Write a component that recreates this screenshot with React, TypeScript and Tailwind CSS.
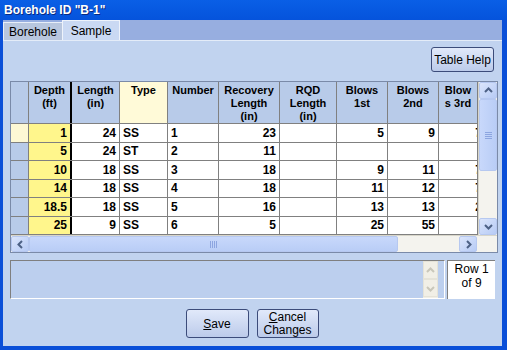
import React from "react";

const cols = [
  { key: "depth", label: ["Depth", "(ft)"], w: 43, align: "right" },
  { key: "length", label: ["Length", "(in)"], w: 48, align: "right" },
  { key: "type", label: ["Type"], w: 48, align: "left" },
  { key: "number", label: ["Number"], w: 51, align: "left" },
  { key: "rec", label: ["Recovery", "Length", "(in)"], w: 61, align: "right" },
  { key: "rqd", label: ["RQD", "Length", "(in)"], w: 57, align: "right" },
  { key: "b1", label: ["Blows", "1st"], w: 51, align: "right" },
  { key: "b2", label: ["Blows", "2nd"], w: 51, align: "right" },
  { key: "b3", label: ["Blow", "s 3rd"], w: 39, align: "right" },
];

const rows = [
  { depth: "1", length: "24", type: "SS", number: "1", rec: "23", rqd: "", b1: "5", b2: "9", b3: "7" },
  { depth: "5", length: "24", type: "ST", number: "2", rec: "11", rqd: "", b1: "", b2: "", b3: "" },
  { depth: "10", length: "18", type: "SS", number: "3", rec: "18", rqd: "", b1: "9", b2: "11", b3: "7" },
  { depth: "14", length: "18", type: "SS", number: "4", rec: "18", rqd: "", b1: "11", b2: "12", b3: "7" },
  { depth: "18.5", length: "18", type: "SS", number: "5", rec: "16", rqd: "", b1: "13", b2: "13", b3: "2" },
  { depth: "25", length: "9", type: "SS", number: "6", rec: "5", rqd: "", b1: "25", b2: "55", b3: "" },
];

const font = { fontFamily: "'Liberation Sans', Arial, sans-serif" };

function Arrow({ dir, disabled }: { dir: "up" | "down" | "left" | "right"; disabled?: boolean }) {
  const pts = {
    up: "2,7 5.5,3.5 9,7",
    down: "2,4 5.5,7.5 9,4",
    left: "7,2 3.5,5.5 7,9",
    right: "4,2 7.5,5.5 4,9",
  }[dir];
  return (
    <svg width="11" height="11" viewBox="0 0 11 11">
      <polyline points={pts} fill="none" stroke={disabled ? "#c9c7ba" : "#4d6185"} strokeWidth="2" />
    </svg>
  );
}

function ScrollBtn({ dir, className = "" }: { dir: "up" | "down" | "left" | "right"; className?: string }) {
  return (
    <div className={`flex items-center justify-center rounded-[2px] border border-[#b6c8f0] bg-gradient-to-br from-[#dbe5fb] to-[#b7cbf5] ${className}`}>
      <Arrow dir={dir} />
    </div>
  );
}

export default function App() {
  return (
    <div className="w-[507px] h-[350px] bg-[#0a4fd8] flex flex-col overflow-hidden" style={font}>
      {/* Title bar */}
      <div className="h-[20px] shrink-0 bg-gradient-to-b from-[#0a5fe6] to-[#0553dc] flex items-center pl-[4px]">
        <span className="text-white font-bold text-[12px] leading-none" style={{ textShadow: "1px 1px 0 #0a2a80" }}>
          Borehole ID "B-1"
        </span>
      </div>
      <div className="flex-1 flex flex-col ml-[3px] mr-[5px] mb-[4px] bg-[#c1d3ef]">
        {/* Tabs */}
        <div className="h-[20px] shrink-0 bg-[#97aee0] flex items-end">
          <div className="h-[18px] w-[59px] bg-[#b8c6de] border-t border-l border-[#e8eef8] flex items-center justify-center text-[12px] text-black">
            Borehole
          </div>
          <div className="h-[20px] w-[58px] bg-[#cad9f3] border-t border-l border-r border-[#eef3fb] flex items-center justify-center text-[12px] text-black">
            Sample
          </div>
        </div>
        <div className="flex-1 flex flex-col px-[7px] pt-[6px] border-t border-[#e4ecf8]">
          <div className="flex justify-end pr-[1px]">
            <button className="w-[63px] h-[25px] rounded-[3px] border border-[#3c4c7a] bg-gradient-to-b from-[#e1e9fa] to-[#bccbea] text-[12px] text-black whitespace-nowrap">
              Table Help
            </button>
          </div>
          {/* Grid */}
          <div className="mt-[9px] w-[488px] h-[172px] border border-[#7a8aa8] bg-white flex flex-col">
            <div className="flex h-[153px]">
              <div className="flex flex-col w-[467px] overflow-hidden">
                {/* Header */}
                <div className="flex h-[42px] shrink-0 border-b border-[#808080]">
                  <div className="w-[18px] shrink-0 bg-[#b8cbe9] border-r border-[#808080]" />
                  {cols.map((c, i) => (
                    <div
                      key={c.key}
                      className={`shrink-0 flex flex-col items-center pt-[2px] text-[11px] font-bold leading-[13px] text-black ${
                        c.key === "type" ? "bg-[#fffad8]" : "bg-[#b8cbe9]"
                      } ${i === 0 ? "border-r-2 border-black" : "border-r border-[#808080]"}`}
                      style={{ width: c.w }}
                    >
                      {c.label.map((l) => (
                        <span key={l} className="whitespace-nowrap">{l}</span>
                      ))}
                    </div>
                  ))}
                </div>
                {/* Rows */}
                {rows.map((r, ri) => (
                  <div key={ri} className="flex h-[18.5px] shrink-0 border-b border-[#808080]">
                    <div className={`w-[18px] shrink-0 border-r border-[#808080] ${ri === 0 ? "bg-[#fdf8d4]" : "bg-[#b8cbe9]"}`} />
                    {cols.map((c, i) => (
                      <div
                        key={c.key}
                        className={`shrink-0 flex items-center overflow-hidden px-[3px] text-[12px] font-bold text-black ${
                          c.align === "right" ? "justify-end" : "justify-start"
                        } ${i === 0 ? "bg-[#fff68c] border-r-2 border-black" : "bg-white border-r border-[#808080]"}`}
                        style={{ width: c.w }}
                      >
                        <span className={c.key === "b3" ? "-mr-[8px]" : ""}>
                          {(r as Record<string, string>)[c.key]}
                        </span>
                      </div>
                    ))}
                  </div>
                ))}
              </div>
              {/* Vertical scrollbar */}
              <div className="w-[19px] shrink-0 flex flex-col bg-[#f4f3ee] border-l border-[#d8d6ca]">
                <ScrollBtn dir="up" className="h-[17px]" />
                <div className="h-[72px] rounded-[2px] border border-[#b6c8f0] bg-gradient-to-r from-[#c8d8fb] to-[#b9cdf6] flex flex-col items-center justify-center gap-[1px]">
                  <div className="w-[7px] h-px bg-[#8ca5e0]" />
                  <div className="w-[7px] h-px bg-[#8ca5e0]" />
                  <div className="w-[7px] h-px bg-[#8ca5e0]" />
                  <div className="w-[7px] h-px bg-[#8ca5e0]" />
                </div>
                <div className="flex-1" />
                <ScrollBtn dir="down" className="h-[17px]" />
              </div>
            </div>
            {/* Horizontal scrollbar */}
            <div className="flex h-[17px] bg-[#f4f3ee] border-t border-[#d8d6ca]">
              <ScrollBtn dir="left" className="w-[18px]" />
              <div className="w-[369px] rounded-[2px] border border-[#b6c8f0] bg-gradient-to-b from-[#c8d8fb] to-[#b9cdf6] flex items-center justify-center gap-[1px]">
                <div className="w-px h-[7px] bg-[#8ca5e0]" />
                <div className="w-px h-[7px] bg-[#8ca5e0]" />
                <div className="w-px h-[7px] bg-[#8ca5e0]" />
                <div className="w-px h-[7px] bg-[#8ca5e0]" />
              </div>
              <div className="flex-1" />
              <ScrollBtn dir="right" className="w-[18px]" />
              <div className="w-[20px] bg-[#f4f3ee]" />
            </div>
          </div>
          {/* Message + row indicator */}
          <div className="mt-[7px] flex gap-[2px] h-[39px]">
            <div className="w-[437px] bg-[#bccfee] border-t border-l border-[#7f7f7f] border-b border-r border-b-white border-r-white flex justify-end pr-[6px]">
              <div className="flex flex-col w-[15px] bg-[#f1efe6]">
                <div className="h-[18px] flex items-center justify-center border border-[#e5e3d8]">
                  <Arrow dir="up" disabled />
                </div>
                <div className="h-[18px] flex items-center justify-center border border-[#e5e3d8]">
                  <Arrow dir="down" disabled />
                </div>
              </div>
            </div>
            <div className="w-[48px] bg-white border-t border-l border-[#7f7f7f] flex flex-col items-center pt-[1px] text-[12px] leading-[14px] text-black">
              <span>Row 1</span>
              <span>of 9</span>
            </div>
          </div>
          {/* Buttons */}
          <div className="mt-[10px] flex justify-center gap-[8px] pr-[1px]">
            <button className="w-[63px] h-[29px] rounded-[3px] border border-[#3c4c7a] bg-gradient-to-b from-[#e1e9fa] to-[#bccbea] text-[12px] text-black">
              <span className="underline">S</span>ave
            </button>
            <button className="w-[62px] h-[29px] rounded-[3px] border border-[#3c4c7a] bg-gradient-to-b from-[#e1e9fa] to-[#bccbea] text-[12px] leading-[13px] text-black">
              <span className="underline">C</span>ancel
              <br />
              Changes
            </button>
          </div>
        </div>
      </div>
    </div>
  );
}
